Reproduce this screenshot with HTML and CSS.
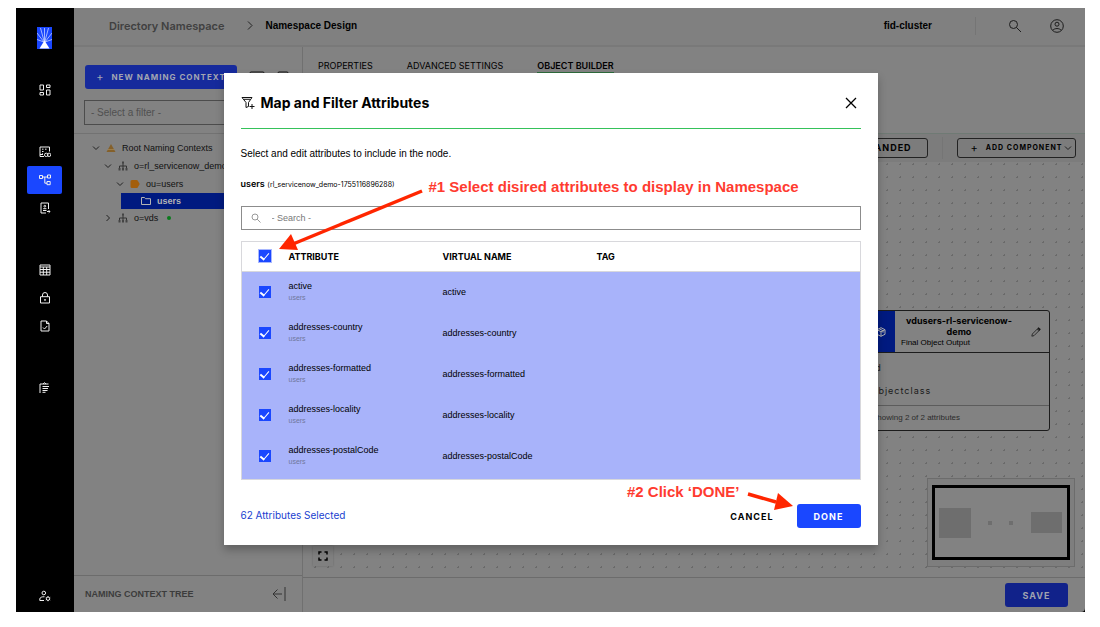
FILE: index.html
```html
<!DOCTYPE html>
<html lang="en">

<head>
  <meta charset="UTF-8">
  <title>Namespace Design</title>
  <meta name="viewport" content="width=device-width, initial-scale=1.0">
  <link rel="stylesheet" href="styles.css">
</head>

<body>
  <div class="app">
    <!-- Side navigation -->
    <nav class="sidebar" aria-label="Main">
      <svg class="logo" viewBox="0 0 15 22" width="15" height="22" aria-hidden="true">
        <rect width="15" height="22" fill="#1a47ff" />
        <path d="M7.5 1v13M3.5 1l3.500 13M11.500 1l-3.500 13M0 6l7 9M15 6l-7 9M0 12.500l7 2.500M15 12.500l-7 2.500" stroke="#dfe6ff" stroke-width=".7" fill="none" />
        <path d="M7.500 13.500L12.500 21.500H2.500z" fill="#fff" />
      </svg>

      <div class="nav-group">
        <button class="nav-btn" aria-label="Dashboard">
          <svg viewBox="0 0 12 12"><path d="M1 1h3.500v5H1zM7.500 1H11v2.500H7.500zM1 8.500h3.500V11H1zM7.500 6H11v5H7.500z" /></svg>
        </button>
      </div>

      <div class="nav-group">
        <button class="nav-btn" aria-label="Data sources">
          <svg viewBox="0 0 12 12"><path d="M5 10.500H1V1h9.500v4.500M3 3.200h1.500M6 3.200h1.500M3 5.500h1.500M3 7.800h1M1 8.500h3" /><rect x="5.500" y="7.200" width="3.500" height="3.300" rx="1.600" /><rect x="8.300" y="7.200" width="3.500" height="3.300" rx="1.600" /></svg>
        </button>
        <button class="nav-btn active" aria-label="Namespace design">
          <svg viewBox="0 0 12 12"><path d="M.5 1.500h3v3h-3zM8.500 1h3v3h-3zM8 7.500h3.200v3.200H8zM3.500 3h5M5.800 3v6.200H8" /></svg>
        </button>
        <button class="nav-btn" aria-label="Directory browser">
          <svg viewBox="0 0 12 12"><path d="M7 11H2V1h7.500v6M4 8.500h3.500" /><circle cx="5.800" cy="4.200" r=".9" /><path d="M4.200 6.700h3.200M8 9.500h3M9.700 8.200L11 9.500l-1.300 1.300" /></svg>
        </button>
      </div>

      <div class="nav-group">
        <button class="nav-btn" aria-label="Tables">
          <svg viewBox="0 0 12 12"><path d="M1 1h10v10H1zM1 3h10M1 5.500h10M1 8.200h10M4.300 3v8M7.700 3v8" /></svg>
        </button>
        <button class="nav-btn" aria-label="Security">
          <svg viewBox="0 0 12 12"><path d="M1.500 4.700h9V11h-9zM3.500 4.700V3a2.500 2.500 0 0 1 5 0v1.700" /><circle cx="6" cy="7.900" r=".6" /></svg>
        </button>
        <button class="nav-btn" aria-label="Reports">
          <svg viewBox="0 0 12 12"><path d="M2 1h5.500L10 3.500V11H2zM7.500 1v2.500H10M4 7.500L5.500 9l2.700-3" /></svg>
        </button>
      </div>

      <div class="nav-group">
        <button class="nav-btn" aria-label="Tasks">
          <svg viewBox="0 0 12 12"><path d="M1 11V2h8.500M4 2l1.500-1.300L7 2M3.500 4.500h6.500M3.500 6.500h5.500M3.500 8.500h5M3.500 10.300h3" /></svg>
        </button>
      </div>

      <div class="nav-group nav-bottom">
        <button class="nav-btn" aria-label="Account settings">
          <svg viewBox="0 0 12 12"><circle cx="4.800" cy="3" r="1.800" /><path d="M5.500 6.800C3 6.500.8 7.500.8 9v1.500H5" /><circle cx="9" cy="8.700" r="1.700" /><path d="M9 6.200V7M9 10.400v.8M6.800 7.400l.7.500M10.500 9.500l.7.500M6.800 10l.7-.5M10.500 7.900l.7-.5" /></svg>
        </button>
      </div>
    </nav>

    <div class="workspace">
      <header class="topbar">
        <a class="crumb" href="#">Directory Namespace</a>
        <svg class="crumb-sep" viewBox="0 0 6 9" width="6" height="9"><path d="M1 .5l4 4-4 4" /></svg>
        <span class="crumb-current">Namespace Design</span>
        <span class="cluster">fid-cluster</span>
        <span class="divider"></span>
        <button class="icon-btn search-top" aria-label="Search">
          <svg viewBox="0 0 14 14" width="14" height="14"><circle cx="5.500" cy="5.500" r="4" /><path d="M8.500 8.500L13 13" /></svg>
        </button>
        <button class="icon-btn" aria-label="Profile">
          <svg viewBox="0 0 14 14" width="14" height="14"><circle cx="7" cy="7" r="6.300" /><circle cx="7" cy="5.200" r="2" /><path d="M2.700 11.200C5 9 9 9 11.300 11.200" /></svg>
        </button>
      </header>

      <div class="columns">
        <!-- Naming context tree -->
        <aside class="tree-panel">
          <div class="tree-tools">
            <button class="new-btn"><span class="plus">+</span>NEW NAMING CONTEXT</button>
            <svg class="tool-icon" viewBox="0 0 16 12" width="16" height="12"><rect x="1" y="1" width="14" height="10" rx="1" /></svg>
            <svg class="tool-icon" viewBox="0 0 12 12" width="12" height="12"><rect x="1" y="1" width="10" height="10" rx="1" /></svg>
          </div>
          <input class="filter-input" type="text" placeholder="- Select a filter -" aria-label="Select a filter">
          <ul class="tree">
            <li>
              <svg class="chev" viewBox="0 0 8 8"><path d="M1 2.500l3 3 3-3" /></svg>
              <svg class="node-icon" viewBox="0 0 10 10"><path d="M5 1l4.500 8h-9z" fill="#84602a" /><path d="M1.500 6.500h7" stroke="#a88a58" stroke-width=".7" /></svg>
              Root Naming Contexts
            </li>
            <li class="level-1">
              <svg class="chev" viewBox="0 0 8 8"><path d="M1 2.500l3 3 3-3" /></svg>
              <svg class="node-icon org" viewBox="0 0 10 10"><path d="M5 2v5M1.500 7V5h7v2" /><path class="boxes" d="M4 .5h2v2H4zM.5 7h2v2.500h-2zM4 7h2v2.500H4zM7.500 7h2v2.500h-2z" /></svg>
              o=rl_servicenow_demo
            </li>
            <li class="level-2">
              <svg class="chev" viewBox="0 0 8 8"><path d="M1 2.500l3 3 3-3" /></svg>
              <svg class="node-icon" viewBox="0 0 10 10"><path d="M2 1h4.500a1.500 1.500 0 0 1 1.200.5L9.700 5 7.700 8.500a1.500 1.500 0 0 1-1.200.5H2A1.500 1.500 0 0 1 .5 7.500v-5A1.500 1.500 0 0 1 2 1z" fill="#a35e0c" /></svg>
              ou=users
            </li>
            <li class="level-3 selected">
              <svg class="node-icon folder" viewBox="0 0 10 10"><path d="M.5 8.500v-7h3l1 1.200h5v5.800z" /></svg>
              users
            </li>
            <li class="level-1">
              <svg class="chev" viewBox="0 0 8 8"><path d="M2.500 1l3 3-3 3" /></svg>
              <svg class="node-icon org" viewBox="0 0 10 10"><path d="M5 2v5M1.500 7V5h7v2" /><path class="boxes" d="M4 .5h2v2H4zM.5 7h2v2.500h-2zM4 7h2v2.500H4zM7.500 7h2v2.500h-2z" /></svg>
              o=vds<span class="online"></span>
            </li>
          </ul>
          <footer class="tree-footer">
            <span>NAMING CONTEXT TREE</span>
            <button class="icon-btn" aria-label="Collapse panel">
              <svg viewBox="0 0 14 16" width="14" height="16"><path d="M10 8H1M5.500 3.500L1 8l4.500 4.500M13 1v14" /></svg>
            </button>
          </footer>
        </aside>

        <!-- Object builder -->
        <main class="builder">
          <nav class="tabs">
            <a href="#">PROPERTIES</a>
            <a href="#">ADVANCED SETTINGS</a>
            <a href="#" class="current">OBJECT BUILDER</a>
          </nav>
          <div class="toolbar">
            <button class="outline-btn">EXPANDED</button>
            <span class="divider"></span>
            <button class="outline-btn add-btn"><span class="plus">+</span>ADD COMPONENT
              <svg class="chev" viewBox="0 0 8 8"><path d="M1 2.500l3 3 3-3" /></svg>
            </button>
          </div>
          <div class="canvas">
            <section class="node-card">
              <div class="node-head">
                <div class="node-badge">
                  <svg viewBox="0 0 10 10" width="10" height="10"><path d="M5 .7l4 2v4.600l-4 2-4-2V2.700zM1 2.700l4 2 4-2M5 4.700v4.600M3 1.700l4 2v2" /></svg>
                </div>
                <div class="node-title">
                  <h2>vdusers-rl-servicenow-demo</h2>
                  <p>Final Object Output</p>
                </div>
                <button class="icon-btn" aria-label="Edit">
                  <svg viewBox="0 0 12 12" width="10" height="10"><path d="M1 11l.6-2.600L8.500 1.500l2 2-6.900 6.900zM7.300 2.700l2 2" /><path d="M8.200 1.800l1.200-1 1.800 1.800-1 1.200z" fill="#111" /></svg>
                </button>
              </div>
              <ul class="node-attrs">
                <li>id</li>
                <li>objectclass</li>
              </ul>
              <p class="node-foot">Showing 2 of 2 attributes</p>
            </section>
            <button class="fit-btn" aria-label="Fit view">
              <svg viewBox="0 0 10 10" width="10" height="10"><path d="M1 3.500V1h2.500M6.500 1H9v2.500M9 6.500V9H6.500M3.500 9H1V6.500" /></svg>
            </button>
            <div class="minimap">
              <svg viewBox="0 0 132 69" width="132" height="69"><path d="M4 20h32v30H4zM53 33h4v4h-4zM74 33h4v4h-4zM96 24h31v21H96z" fill="#6e6e6e" /></svg>
            </div>
          </div>
          <footer class="builder-footer">
            <button class="save-btn">SAVE</button>
          </footer>
        </main>
      </div>
    </div>

    <!-- Map and filter dialog -->
    <div class="overlay">
      <div class="modal" role="dialog" aria-labelledby="modal-title">
        <div class="modal-header">
          <svg class="filter-icon" viewBox="0 0 14 14" width="14" height="14"><path d="M1 1.500h10L7.500 6.500v4l-2.500 1v-5zM3 3.300h6M8.500 10.500h5M11 8v5" /></svg>
          <h1 id="modal-title">Map and Filter Attributes</h1>
          <button class="icon-btn close-btn" aria-label="Close">
            <svg viewBox="0 0 12 12" width="12" height="12"><path d="M1 1l10 10M11 1L1 11" /></svg>
          </button>
        </div>
        <p class="intro">Select and edit attributes to include in the node.</p>
        <p class="source"><strong>users</strong> <small>(rl_servicenow_demo-1755116896288)</small></p>
        <label class="search-box">
          <svg viewBox="0 0 10 10" width="10" height="10"><circle cx="4" cy="4" r="3" /><path d="M6.200 6.200L9.500 9.500" /></svg>
          <input type="text" placeholder="- Search -" aria-label="Search attributes">
        </label>
        <div class="table-wrap">
          <table>
            <thead>
              <tr>
                <th class="check-col"><input type="checkbox" class="select-all" aria-label="Select all" checked></th>
                <th class="name-col">ATTRIBUTE</th>
                <th class="name-col">VIRTUAL NAME</th>
                <th>TAG</th>
              </tr>
            </thead>
            <tbody>
              <tr>
                <td><input type="checkbox" id="attr-1" checked></td>
                <td><label for="attr-1">active</label><small>users</small></td>
                <td>active</td>
                <td></td>
              </tr>
              <tr>
                <td><input type="checkbox" id="attr-2" checked></td>
                <td><label for="attr-2">addresses-country</label><small>users</small></td>
                <td>addresses-country</td>
                <td></td>
              </tr>
              <tr>
                <td><input type="checkbox" id="attr-3" checked></td>
                <td><label for="attr-3">addresses-formatted</label><small>users</small></td>
                <td>addresses-formatted</td>
                <td></td>
              </tr>
              <tr>
                <td><input type="checkbox" id="attr-4" checked></td>
                <td><label for="attr-4">addresses-locality</label><small>users</small></td>
                <td>addresses-locality</td>
                <td></td>
              </tr>
              <tr>
                <td><input type="checkbox" id="attr-5" checked></td>
                <td><label for="attr-5">addresses-postalCode</label><small>users</small></td>
                <td>addresses-postalCode</td>
                <td></td>
              </tr>
            </tbody>
          </table>
        </div>
        <div class="modal-footer">
          <span class="count">62 Attributes Selected</span>
          <button class="cancel-btn">CANCEL</button>
          <button class="done-btn">DONE</button>
        </div>

        <!-- Step notes -->
        <p class="note note-1">#1 Select disired attributes to display in Namespace</p>
        <svg class="arrow arrow-1" viewBox="0 0 146 64" width="146" height="64"><path d="M143 4L14 57" stroke="#ff2600" stroke-width="3.500" /><path d="M0 62L12 47l7 16z" fill="#ff2600" /></svg>
        <p class="note note-2">#2 Click ‘DONE’</p>
        <svg class="arrow arrow-2" viewBox="0 0 46 20" width="46" height="20"><path d="M1 3l28 8" stroke="#ff2600" stroke-width="3.500" /><path d="M46 15L31 2l-4 17z" fill="#ff2600" /></svg>
      </div>
    </div>
  </div>
</body>

</html>
```
FILE: styles.css
```css
/* General Styles */
* {
  box-sizing: border-box;
}

body {
  margin: 0;
  padding: 8px 15px 15px 16px;
  background: #ffffff;
  font-family: "Liberation Sans", Arial, sans-serif;
  font-size: 9px;
  color: #000;
}

h1,
h2,
p,
ul {
  margin: 0;
  padding: 0;
  list-style: none;
}

a {
  color: inherit;
  text-decoration: none;
}

button {
  font: inherit;
  color: inherit;
  cursor: pointer;
  border: none;
  background: none;
  padding: 0;
  white-space: nowrap;
}

svg {
  display: block;
  flex: none;
  fill: none;
}

/* Headings, tabs and action buttons use the wider face */
h1,
h2,
th,
.crumb,
.tabs,
.source,
.count,
.node-attrs,
.new-btn,
.outline-btn,
.save-btn,
.cancel-btn,
.done-btn {
  font-family: Inter, "Liberation Sans", sans-serif;
}

.app {
  position: relative;
  display: flex;
  min-height: calc(100vh - 23px);
  background: #000;
}

/* Sidebar */
.sidebar {
  flex: none;
  width: 58px;
  padding: 19px 1px 2px 0;
  display: flex;
  flex-direction: column;
  align-items: center;
  gap: 34px;
}

.logo {
  margin-bottom: -7px;
}

.nav-group {
  display: flex;
  flex-direction: column;
}

.nav-bottom {
  margin-top: auto;
}

.nav-btn {
  width: 35px;
  height: 28px;
  border-radius: 2px;
  display: flex;
  align-items: center;
  justify-content: center;
}

.nav-btn svg {
  width: 12px;
  height: 12px;
  stroke: #f0f0f0;
}

.nav-btn.active {
  background: #1a47ff;
}

/* Workspace */
.workspace {
  flex: 1;
  min-width: 0;
  display: flex;
  flex-direction: column;
  background: #828282;
  border-bottom-right-radius: 4px;
}

.topbar {
  height: 39px;
  padding: 0 21px 2px 35px;
  display: flex;
  align-items: center;
  background: #808080;
  border-bottom: 2px solid #797979;
}

.crumb {
  font-size: 11px;
  font-weight: 600;
  color: #404040;
}

.crumb-sep {
  margin: 0 12px 0 23px;
  stroke: #222;
}

.crumb-current {
  font-size: 10px;
  font-weight: 700;
}

.cluster {
  margin-left: auto;
  font-size: 10px;
  font-weight: 700;
}

.divider {
  width: 1px;
  height: 18px;
  background: #757575;
}

.topbar .divider {
  margin: 0 32px 0 43px;
}

.icon-btn svg {
  stroke: #1c1c1c;
}

.search-top {
  margin-right: 28px;
}

.columns {
  flex: 1;
  display: flex;
}

/* Tree Panel */
.tree-panel {
  flex: none;
  width: 229px;
  display: flex;
  flex-direction: column;
  border-right: 1px solid #707070;
}

.tree-tools {
  display: flex;
  align-items: center;
  gap: 12px;
  padding: 18px 11px 11px;
}

.new-btn {
  width: 152px;
  height: 24px;
  border-radius: 3px;
  background: #162a9c;
  color: #a3a6b2;
  font-size: 8px;
  font-weight: 700;
  letter-spacing: 1px;
}

.plus {
  margin-right: 7px;
  font-size: 11px;
  font-weight: 400;
  vertical-align: -1px;
}

.tool-icon {
  stroke: #111;
}

.filter-input {
  height: 25px;
  margin: 0 11px 8px 10px;
  padding: 0 6px;
  border: 1px solid #4c4c4c;
  background: transparent;
  font: inherit;
  font-size: 10px;
}

.filter-input::placeholder {
  color: #505050;
}

.tree {
  flex: 1;
  padding-top: 5px;
  border-top: 1px solid #727272;
}

.tree li {
  height: 18px;
  padding-left: 18px;
  display: flex;
  align-items: center;
  white-space: nowrap;
  color: #111;
}

.tree .level-1 {
  padding-left: 30px;
}

.tree .level-2 {
  padding-left: 42px;
}

.tree .selected {
  height: 16px;
  margin-left: 47px;
  padding-left: 20px;
  background: #001a80;
  color: #b4b4b4;
  font-weight: 700;
}

.chev {
  width: 8px;
  height: 8px;
  stroke: #222;
}

.node-icon {
  width: 10px;
  height: 10px;
  margin: 0 6px;
}

.org {
  stroke: #333;
}

.org .boxes {
  fill: #444;
  stroke: none;
}

.selected .folder {
  margin-left: 0;
  stroke: #b4b4b4;
}

.online {
  width: 4px;
  height: 4px;
  margin-left: 9px;
  border-radius: 50%;
  background: #0a7a1c;
}

.tree-footer {
  height: 37px;
  padding: 0 16px 0 11px;
  display: flex;
  align-items: center;
  justify-content: space-between;
  border-top: 1px solid #6c6c6c;
  color: #3c3c3c;
  font-weight: 700;
}

.tree-footer .icon-btn svg {
  stroke: #333;
}

/* Builder */
.builder {
  flex: 1;
  min-width: 0;
  display: flex;
  flex-direction: column;
}

.tabs {
  height: 86px;
  padding: 13px 15px 0;
  display: flex;
  align-items: flex-start;
  gap: 34px;
  line-height: 12px;
}

.tabs .current {
  font-weight: 600;
  border-bottom: 1px solid #2d6b3c;
}

.toolbar {
  height: 29px;
  padding: 0 9px 1px;
  display: flex;
  align-items: center;
  justify-content: flex-end;
  gap: 14px;
  background: #7c7c7c;
  border-top: 1px solid #6f7a74;
}

.toolbar .divider {
  height: 22px;
}

.outline-btn {
  width: 90px;
  height: 20px;
  border: 1px solid #222;
  border-radius: 3px;
  font-weight: 700;
  letter-spacing: 1px;
}

.add-btn {
  width: 119px;
  padding-left: 10px;
  display: flex;
  align-items: center;
  justify-content: center;
  font-size: 7px;
}

.add-btn .chev {
  margin-left: 2px;
}

.canvas {
  position: relative;
  flex: 1;
  background-image: radial-gradient(#6a6a6a 1px, transparent 1px);
  background-size: 13px 13px;
  background-position: 6px -4px;
}

.node-card {
  position: absolute;
  top: 148px;
  right: 35px;
  width: 184px;
  background: #828282;
  border: 1px solid #1c1c1c;
  border-radius: 3px;
}

.node-head {
  height: 42px;
  display: flex;
  align-items: center;
  border-bottom: 1px solid #1c1c1c;
}

.node-badge {
  width: 28px;
  align-self: stretch;
  display: flex;
  align-items: center;
  justify-content: center;
  background: #001a80;
}

.node-badge svg {
  stroke: #b0b0b0;
}

.node-title {
  flex: 1;
  padding-left: 6px;
  line-height: 11px;
}

.node-title h2 {
  width: 116px;
  font-size: 9px;
  font-weight: 700;
  text-align: center;
}

.node-title p {
  font-size: 8px;
}

.node-head .icon-btn {
  margin-right: 8px;
}

.node-attrs {
  padding: 3px 5px;
  letter-spacing: 1px;
  color: #1a1a1a;
}

.node-attrs li {
  line-height: 23px;
}

.node-foot {
  padding: 0 5px;
  border-top: 1px solid #5c5c5c;
  font-size: 8px;
  line-height: 24px;
  color: #2c2c2c;
}

.fit-btn {
  position: absolute;
  left: 10px;
  bottom: 11px;
  width: 20px;
  height: 20px;
  display: flex;
  align-items: center;
  justify-content: center;
  background: #808080;
  box-shadow: 0 0 2px rgba(0, 0, 0, 0.2);
}

.fit-btn svg {
  stroke: #000;
  stroke-width: 1.5;
}

.minimap {
  position: absolute;
  right: 10px;
  bottom: 10px;
  padding: 6px 4px;
  border: 1px solid #6c6c6c;
  background: #7e7e7e;
}

.minimap svg {
  box-sizing: content-box;
  border: 3px solid #000;
  background: #828282;
}

.builder-footer {
  height: 35px;
  padding: 0 17px;
  display: flex;
  align-items: center;
  justify-content: flex-end;
  border-top: 1px solid #6c6c6c;
}

.save-btn {
  width: 63px;
  height: 24px;
  border-radius: 3px;
  background: #11228a;
  color: #a0a3b0;
  font-weight: 700;
  letter-spacing: 1px;
}

/* Modal */
.overlay {
  position: absolute;
  inset: 0;
  padding-bottom: 2px;
  display: flex;
  align-items: center;
  justify-content: center;
}

.modal {
  position: relative;
  width: 654px;
  max-width: 94%;
  padding: 17px;
  background: #ffffff;
  box-shadow: 0 5px 8px rgba(0, 0, 0, 0.25);
}

.modal-header {
  height: 39px;
  padding-bottom: 13px;
  display: flex;
  align-items: center;
  border-bottom: 1px solid #35c25a;
}

.modal-header h1 {
  margin-left: 6px;
  font-size: 14px;
  font-weight: 700;
}

.filter-icon {
  stroke: #111;
}

.close-btn {
  margin: 0 4px 0 auto;
}

.close-btn svg {
  stroke: #000;
  stroke-width: 1.3;
}

.intro {
  margin-top: 17px;
  font-size: 10px;
  line-height: 16px;
}

.source {
  margin-top: 14px;
  line-height: 16px;
}

.source strong {
  font-weight: 600;
}

.source small {
  font-size: 7px;
}

.search-box {
  height: 24px;
  margin-top: 13px;
  padding: 0 9px;
  display: flex;
  align-items: center;
  gap: 11px;
  border: 1px solid #8c8c8c;
}

.search-box svg {
  stroke: #999;
}

.search-box input {
  flex: 1;
  padding: 0;
  border: none;
  outline: none;
  font: inherit;
}

.search-box input::placeholder {
  color: #777;
}

.table-wrap {
  height: 239px;
  margin-top: 11px;
  overflow: hidden;
  border: 1px solid #d8d8dc;
  background: #a8b3fa;
}

table {
  width: 100%;
  table-layout: fixed;
  border-collapse: collapse;
  text-align: left;
}

th,
td {
  padding: 0;
}

thead tr {
  height: 29px;
  background: #ffffff;
  border-bottom: 1px solid #d8d8dc;
}

th {
  font-weight: 700;
}

.check-col {
  width: 47px;
}

.name-col {
  width: 154px;
}

tbody tr {
  height: 41px;
}

td label,
td small {
  display: block;
  line-height: 11px;
}

td small {
  font-size: 7px;
  color: #70779c;
}

input[type="checkbox"] {
  appearance: none;
  width: 12px;
  height: 12px;
  margin: 0 0 0 17px;
  display: grid;
  place-items: center;
  background: #1a47ff;
}

input[type="checkbox"]:checked::after {
  content: "";
  width: 4px;
  height: 7px;
  margin-bottom: 1px;
  border: solid #ffffff;
  border-width: 0 1px 2px 0;
  transform: rotate(40deg);
}

.select-all {
  outline: 1px solid #a9b8ff;
}

.modal-footer {
  height: 24px;
  margin-top: 24px;
  display: flex;
  align-items: center;
}

.count {
  margin-right: auto;
  padding-bottom: 3px;
  font-size: 10px;
  color: #1a3fd0;
}

.cancel-btn {
  margin-right: 23px;
  font-weight: 700;
  letter-spacing: 1px;
}

.done-btn {
  width: 64px;
  height: 24px;
  border-radius: 3px;
  background: #1a47ff;
  color: #ffffff;
  font-weight: 700;
  letter-spacing: 1px;
}

/* Step Notes */
.note {
  position: absolute;
  font-size: 15px;
  font-weight: 700;
  line-height: 16px;
  color: #ff3b30;
  white-space: nowrap;
}

.note-1 {
  top: 106px;
  left: 205px;
}

.note-2 {
  right: 138px;
  bottom: 45px;
}

.arrow {
  position: absolute;
}

.arrow-1 {
  top: 114px;
  left: 55px;
}

.arrow-2 {
  right: 85px;
  bottom: 34px;
}
```
